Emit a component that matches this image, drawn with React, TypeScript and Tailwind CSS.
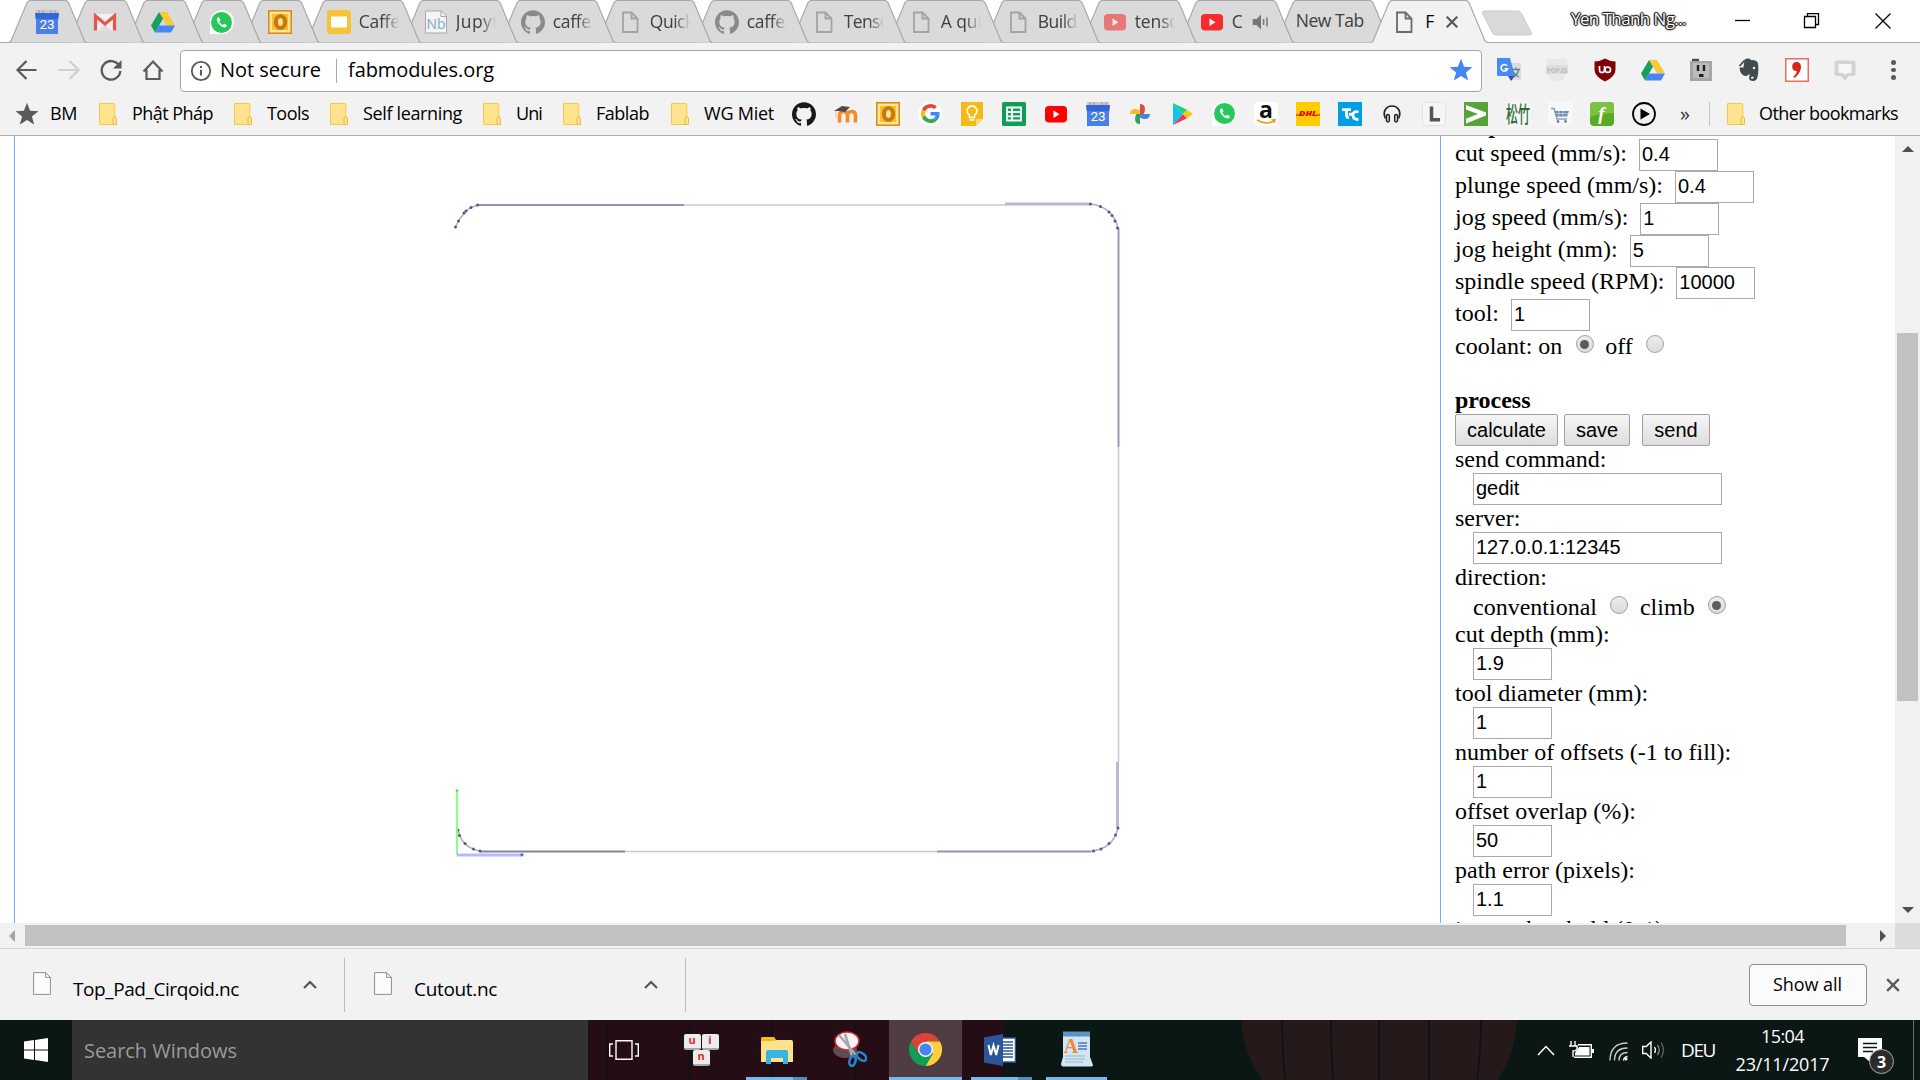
import React, { useLayoutEffect, useRef, useState } from "react";
import { SiGithub } from "react-icons/si";

/* Text run that tracks its letters so that it fills a given width. */
function Fit({ w, className = "", children }: { w: number; className?: string; children: string }) {
  const ref = useRef<HTMLSpanElement>(null);
  const [ls, setLs] = useState(0);
  useLayoutEffect(() => {
    if (!ref.current) return;
    const natural = ref.current.getBoundingClientRect().width;
    setLs((w - natural) / children.length);
  }, []);
  return (
    <span ref={ref} className={"inline-block shrink-0 whitespace-pre " + className} style={{ letterSpacing: ls }}>
      {children}
    </span>
  );
}

/* ---------- icons ---------- */
const I = ({ children, vb = "0 0 24 24", className = "size-6" }: { children: React.ReactNode; vb?: string; className?: string }) => (
  <svg viewBox={vb} className={"shrink-0 " + className} fill="none">{children}</svg>
);
const Calendar = () => (
  <I>
    <rect x="1" y="0" width="22" height="6" fill="#c9c9c9" />
    <path d="M4 0v3M8 0v3M16 0v3M20 0v3" stroke="#9a9a9a" />
    <path d="M0 3h24l-1 8v13H1V11z" fill="#4a7fe8" />
    <path d="M0 3h24l-1 6H1z" fill="#3367d6" />
    <text x="12" y="18.5" fontSize="13.500" textAnchor="middle" fill="#fff" fontFamily="Roboto">23</text>
  </I>
);
const Gmail = () => (
  <I>
    <rect x="1" y="4" width="22" height="17" rx="1.5" fill="#f3f0f0" />
    <path d="M5 21l7-7 7 7z" fill="#dedcdc" />
    <path d="M2.5 20.500V6L12 14l9.500-8v14.500" stroke="#e0574c" strokeWidth="3.200" />
  </I>
);
const Drive = () => (
  <I>
    <path d="M8 2h8l8 13.500h-8z" fill="#fbc934" />
    <path d="M8 2l4 6.800L4 22.500 0 15.500z" fill="#17a05d" />
    <path d="M8 15.500h16l-4 7H4z" fill="#4787f3" />
  </I>
);
const WhatsApp = () => (
  <span className="flex size-6 shrink-0 items-center justify-center rounded-full rounded-bl-sm bg-white">
    <span className="flex size-[21px] items-center justify-center rounded-full bg-[#25c95b]">
      <I className="size-[17px]">
        <path d="M7.500 4.500C5 6 4.500 9 8 13.500s8 7 10.500 5c1.500-1.500 1-2.500 0-3.200l-2.500-1.500c-1 0-1.500 2-2.500 1.700-2-.8-4-3-4.500-4.500 0-1 1.500-1.500 1.500-2.500l-1.300-3c-.3-.8-1-1-1.700-1z" fill="#fff" />
      </I>
    </span>
  </span>
);
const Outlook = () => (
  <I>
    <rect x=".75" y=".75" width="22.500" height="22.500" fill="#fcd364" stroke="#d98d1c" strokeWidth="1.500" />
    <rect x="3" y="3" width="18" height="18" fill="#f8bf2c" stroke="#fff0b8" strokeWidth="1.500" />
    <ellipse cx="12.500" cy="12" rx="4.700" ry="6" stroke="#c97712" strokeWidth="4" />
    <ellipse cx="12.500" cy="12" rx="2" ry="3.500" fill="#fde9a9" />
  </I>
);
const Slides = () => (
  <I>
    <rect width="24" height="24" rx="2.500" fill="#f6c338" />
    <rect x="4" y="6.500" width="16" height="11" fill="#fff" />
  </I>
);
const Notebook = () => (
  <I>
    <path d="M1.500 1h16l5 5v17h-21z" fill="#f5f5f5" stroke="#a8a8a8" />
    <path d="M17 1v5.500h5.500" stroke="#a8a8a8" />
    <text x="12" y="19" fontSize="15" textAnchor="middle" fill="#82b1d2" stroke="#82b1d2" strokeWidth=".2" fontFamily="Open Sans" textLength="19" lengthAdjust="spacingAndGlyphs">Nb</text>
  </I>
);
const Page = ({ dark = false }) => (
  <I className={dark ? "size-6 text-[#6b6b6b]" : "size-6 text-[#a3a3a3]"}>
    <path d="M5 2.500h8.500l6 6V22H5zM13.500 2.500v6h6" stroke="currentColor" strokeWidth="1.800" />
  </I>
);
const YouTube = () => (
  <I>
    <rect x="1" y="4" width="22" height="16.500" rx="4" fill="#f00" />
    <path d="M9.500 8.500l6 3.700-6 3.700z" fill="#fff" />
  </I>
);
const Star = ({ className }: { className: string }) => (
  <I className={className}>
    <path d="M12 0.800l3.100 7.900 8.300.5-6.500 5.200 2.300 8.200-7.200-4.700-7.200 4.700 2.300-8.200L.6 9.200l8.300-.5z" fill="currentColor" />
  </I>
);
const Folder = () => (
  <I vb="0 0 18 22" className="h-[22px] w-[18px]">
    <path d="M.5.5h14.800l.5 1v13.500h1.700v6.500H.5z" fill="#ffe38d" stroke="#f0c94f" />
    <path d="M14 21v-5.500q0-1.500 1.700-1.500t1.800 1.500v5q0 1-1.200 1H14" fill="#ffe38d" stroke="#e5b93a" />
  </I>
);
const Google = () => (
  <span className="flex size-6 items-center justify-center rounded-full bg-white">
    <svg viewBox="0 0 48 48" className="size-[19px]">
      <path fill="#EA4335" d="M24 9.500c3.540 0 6.710 1.220 9.210 3.600l6.850-6.850C35.900 2.380 30.470 0 24 0 14.620 0 6.510 5.380 2.560 13.220l7.980 6.190C12.430 13.720 17.740 9.500 24 9.500z" />
      <path fill="#4285F4" d="M46.980 24.550c0-1.570-.15-3.090-.38-4.550H24v9.020h12.940c-.58 2.960-2.260 5.480-4.780 7.180l7.730 6c4.510-4.180 7.090-10.360 7.090-17.650z" />
      <path fill="#FBBC05" d="M10.530 28.590c-.48-1.450-.76-2.990-.76-4.590s.27-3.140.76-4.590l-7.980-6.190C.92 16.460 0 20.120 0 24c0 3.880.92 7.540 2.560 10.780l7.970-6.190z" />
      <path fill="#34A853" d="M24 48c6.480 0 11.930-2.130 15.890-5.810l-7.730-6c-2.150 1.450-4.920 2.300-8.160 2.300-6.260 0-11.570-4.220-13.470-9.910l-7.980 6.190C6.510 42.620 14.620 48 24 48z" />
    </svg>
  </span>
);
const Moodle = () => (
  <I>
    <path d="M5.500 20.500v-7q0-4 4-4t4 4v7m0-7q0-4 4-4t4 4v7" stroke="#f68a2b" strokeWidth="3.600" />
    <path d="M0 9l8-5 8 1-5 5-6-1z" fill="#4a4a4a" />
    <path d="M2 9v7" stroke="#e5c3a0" />
  </I>
);
const Keep = () => (
  <I>
    <path d="M1 0h22v17l-7 7H1z" fill="#f5ba15" />
    <path d="M23 17l-7 7v-7z" fill="#fbdc7c" />
    <path d="M9.500 15.500v-2.300a5 5 0 1 1 5 0v2.300zM9.500 18h5" stroke="#fff" strokeWidth="1.600" />
  </I>
);
const Sheets = () => (
  <I>
    <rect width="24" height="24" rx="1.500" fill="#109d58" />
    <path d="M5 5.500h14v13H5zM5 10h14M5 14.300h14M10 5.500v13" stroke="#fff" strokeWidth="1.800" />
  </I>
);
const Photos = () => (
  <I>
    <path d="M12 12V2q5 0 5 5.500 0 2-1.500 4.500z" fill="#dc4b3e" />
    <path d="M12 12h10q0 5-5.500 5-2 0-4.500-1.500z" fill="#4a80e8" />
    <path d="M12 12v10q-5 0-5-5.500 0-2 1.500-4.500z" fill="#2da160" />
    <path d="M12 12H2q0-5 5.500-5 2 0 4.500 1.500z" fill="#f9bb2d" />
  </I>
);
const Play = () => (
  <I>
    <path d="M3 1v22l10-11z" fill="#13c3ef" />
    <path d="M3 1l10 11 4-4.300z" fill="#17d477" />
    <path d="M3 23l10-11 4 4.300z" fill="#ef3650" />
    <path d="M17 7.700L23 12l-6 4.300L13 12z" fill="#fdc612" />
  </I>
);
const Amazon = () => (
  <I>
    <rect width="24" height="24" rx="4" fill="#fff" />
    <text x="12" y="16" fontSize="23" fontWeight="700" textAnchor="middle" fill="#111" fontFamily="Open Sans">a</text>
    <path d="M3 18q8.500 5.500 17 1M17.500 18l3.500-.3-1 3" stroke="#f79c1d" strokeWidth="1.600" />
  </I>
);
const Dhl = () => (
  <I>
    <rect width="24" height="24" fill="#fc0" />
    <text x="12" y="14" fontSize="6" fontWeight="800" fontStyle="italic" textAnchor="middle" fill="#d40511" fontFamily="Open Sans" textLength="18" lengthAdjust="spacingAndGlyphs">DHL</text>
    <path d="M0 13h4M20 13h4" stroke="#d40511" />
  </I>
);
const Tk = () => (
  <I>
    <rect width="24" height="24" fill="#009fe3" />
    <path d="M4 7.700h9M8.500 7.500v6q0 2 2.500 2M20.500 10q-5.500-1.500-5.500 3t5.500 4.500M15 12l-4 .5" stroke="#fff" strokeWidth="2.800" />
  </I>
);
const Headphones = () => (
  <I>
    <path d="M5.500 16.500C2 9 6.500 4 12 4s10 5 6.500 12.500" stroke="#222" strokeWidth="1.700" />
    <rect x="6.500" y="12.500" width="2.800" height="7.500" rx="1.400" stroke="#222" strokeWidth="1.500" />
    <rect x="14.700" y="12.500" width="2.800" height="7.500" rx="1.400" stroke="#222" strokeWidth="1.500" />
  </I>
);
const Leo = () => (
  <I>
    <rect x=".5" y=".5" width="23" height="23" rx="3" fill="#f6f6f6" stroke="#e3e3e3" />
    <path d="M9.500 4.500v13.200h8.500" stroke="#555" strokeWidth="3.500" />
  </I>
);
const Arrow = () => (
  <I>
    <rect width="24" height="24" fill="#58a23a" />
    <path d="M2 3l20 7.500v3L2 21.500v-4.800L14 12 2 7.500z" fill="#fff" />
  </I>
);
const Bamboo = () => (
  <I>
    <rect width="24" height="24" fill="#f5f7f5" />
    <text x="12" y="20" fontSize="22" fontWeight="500" textAnchor="middle" fill="#2f6b3a" fontFamily="Noto Sans CJK SC" textLength="24" lengthAdjust="spacingAndGlyphs">松竹</text>
  </I>
);
const Cart = () => (
  <I>
    <rect width="24" height="24" fill="#f7f8fa" />
    <path d="M3 6.500h3l3 10.500h10" stroke="#8da0b8" strokeWidth="1.500" />
    <path d="M6.500 9H21l-2 5.500H8.500z" fill="#6d8bb0" />
    <path d="M11 9v5M15 9v5M7.500 11.500h13" stroke="#c9d5e4" strokeWidth=".8" />
    <circle cx="10" cy="19.500" r="1.400" fill="#7186a0" />
    <circle cx="17.500" cy="19.500" r="1.400" fill="#7186a0" />
  </I>
);
const Feedly = () => (
  <I>
    <rect width="24" height="24" rx="4" fill="#56ab22" />
    <path d="M0 4q0-4 4-4h16q4 0 4 4v7q-12 0-24 4z" fill="#7cc142" />
    <text x="11.500" y="17.500" fontSize="19" fontWeight="700" fontStyle="italic" textAnchor="middle" fill="#fff" fontFamily="Liberation Serif">f</text>
  </I>
);
const PlayCircle = () => (
  <I>
    <circle cx="12" cy="12" r="11" stroke="#000" strokeWidth="1.800" />
    <path d="M8.500 6.500l9.500 5.500-9.500 5.500z" fill="#000" />
  </I>
);
const Translate = () => (
  <I>
    <path d="M10 5h14v17H13z" fill="#dcdcdc" />
    <path d="M0 0h13l5 18H1.500Q0 18 0 16.500z" fill="#4a8af4" />
    <path d="M11 18h7l-4 5z" fill="#3a50b8" />
    <path d="M15 11.500h8M19 9.500v2M21.500 12q-1 5-5 7M16.500 14q2 3.500 5.500 5" stroke="#5f7b95" strokeWidth="1.300" />
    <path d="M10 7.700a3.300 3.300 0 1 0 .6 3H7.500" stroke="#fff" strokeWidth="1.600" />
  </I>
);
const Popjs = () => (
  <I>
    <path d="M2 1h20v6H2zM3 16h18l-2 5-7 3-7-3z" fill="#e8e8e8" />
    <rect x="1" y="7" width="22" height="9" fill="#dedede" />
    <text x="12" y="14.500" fontSize="8" fontWeight="700" textAnchor="middle" fill="#b9b9b9" fontFamily="Liberation Sans" textLength="20" lengthAdjust="spacingAndGlyphs">POPJS</text>
  </I>
);
const Ublock = () => (
  <I>
    <path d="M12 .5q5 3 10.500 3v8q0 7-10.500 12Q1.500 18.500 1.500 11.500v-8Q7 3.500 12 .5z" fill="#800005" />
    <path d="M6.500 8v4q0 2.500 2.500 2.500t2.500-2.500V8" stroke="#fff" strokeWidth="1.700" />
    <circle cx="14.800" cy="11.700" r="2.700" stroke="#fff" strokeWidth="1.700" />
  </I>
);
const Socket = () => (
  <I>
    <path d="M1 3h2V.500h7V3h13v20H1z" fill="#a5a5a5" />
    <path d="M3 1h7v2H3z" fill="#4b4b4b" />
    <rect x="4" y="5" width="16" height="15" fill="#bcbcbc" />
    <path d="M9 7v6M15 7v6" stroke="#1f1f1f" strokeWidth="2.400" />
    <path d="M10 17.500h4.500" stroke="#1f1f1f" strokeWidth="3" />
  </I>
);
const Evernote = () => (
  <I>
    <path d="M7.500 1.500Q12-.5 14 2q7 0 7 4 1 6-.5 13-.8 4-4.500 4-4 0-4-3.500 0-2.500 3-2.500v2q-1.500 0-1 1.500 2.500 1 3-1.500-4 0-5-3-1 2.500-4 2Q3 17 2.500 9.500h4z" fill="#3f4c50" />
    <path d="M2.500 8l5-5.500" stroke="#3f4c50" strokeWidth="1.800" />
    <circle cx="17" cy="10" r="1.200" fill="#f2f2f2" />
  </I>
);
const Nine = () => (
  <I>
    <rect x=".75" y=".75" width="22.500" height="22.500" fill="#fff" stroke="#ee6a5f" strokeWidth="1.500" />
    <path d="M12 4c5 0 6.500 9-2.500 16l-1.300-1.300q3.800-3.200 3.500-5.700-4.500 0-4.500-4.500T12 4z" fill="#d8251b" />
  </I>
);
const Bubble = () => (
  <I>
    <path d="M4 2.500h16q2.500 0 2.500 2.500v10.500q0 2.500-2.500 2.500h-4l-4 4.500L8 18H4q-2.500 0-2.500-2.500V5q0-2.500 2.500-2.500z" fill="#d3d3d3" />
    <path d="M5.500 6h13v9h-4.500l-2 2-2-2H5.500z" fill="#f7f7f7" />
  </I>
);
const GitHub = ({ className }: { className: string }) => <SiGithub className={"size-6 shrink-0 " + className} />;

/* ---------- tab strip ---------- */
function Tab({ w, z, children, active = false, className = "" }: { w: number; z: number; children: React.ReactNode; active?: boolean; className?: string }) {
  return (
    <div className={"relative flex h-[43px] shrink-0 items-start " + className} style={{ width: w, zIndex: z }}>
      <svg className="absolute inset-0 h-[43px] w-full" viewBox={`0 0 ${w} 43`} preserveAspectRatio="none">
        <path d={`M0 42.500L2 41 18 2.500 20.500.5H${w - 20.5}L${w - 18} 2.500 ${w - 2} 41 ${w} 42.500`} fill={active ? "#f2f2f2" : "#dadada"} stroke="#a9a9a9" strokeWidth="1.200" />
        {active && <path d={`M1 42.700H${w - 1}`} stroke="#f2f2f2" strokeWidth="1.500" />}
      </svg>
      <div className="relative flex w-full items-center pt-[10px]">{children}</div>
    </div>
  );
}
const Title = ({ children, w = 48, className = "" }: { children: string; w?: number; className?: string }) => (
  <span className={"-mt-[2px] ml-[8px] w-[41px] overflow-hidden text-[17.500px] leading-6 text-[#404040] [mask-image:linear-gradient(90deg,#000_60%,transparent_98%)] " + className}>
    <Fit w={w}>{children}</Fit>
  </span>
);

const pinned = [Calendar, Gmail, Drive, WhatsApp, Outlook];
const tabs: { icon: React.ReactNode; title: string; w: number }[] = [
  { icon: <Slides />, title: "Caffe", w: 41 },
  { icon: <Notebook />, title: "Jupyt", w: 43 },
  { icon: <GitHub className="text-[#8a8a8a]" />, title: "caffe/", w: 44 },
  { icon: <Page />, title: "Quick", w: 44 },
  { icon: <GitHub className="text-[#8a8a8a]" />, title: "caffe/", w: 44 },
  { icon: <Page />, title: "Tenso", w: 46 },
  { icon: <Page />, title: "A qui", w: 41 },
  { icon: <Page />, title: "Build", w: 39 },
  { icon: <span className="opacity-45"><YouTube /></span>, title: "tenso", w: 45 },
];

function TabStrip() {
  return (
    <div className="relative flex h-[43px] bg-white pl-[9px] shadow-[inset_0_-1px_0_#a9a9a9]">
      {pinned.map((P, i) => (
        <Tab key={i} w={77.5} z={30 - i} className={i ? "-ml-[19.200px]" : ""}>
          <span className="flex w-full justify-center pr-[2px]"><P /></span>
        </Tab>
      ))}
      {tabs.map((t, i) => (
        <Tab key={i} w={116} z={20 - i} className={i ? "-ml-[19px]" : "-ml-[15px]"}>
          <span className="ml-[22px] flex">{t.icon}</span>
          <Title w={t.w}>{t.title}</Title>
        </Tab>
      ))}
      <Tab w={116} z={10} className="-ml-[19px]">
        <span className="ml-[22px] flex opacity-80"><YouTube /></span>
        <Title w={12} className="!w-[10px] [mask-image:none]">C</Title>
        <I className="ml-[10px] size-[18px] text-[#777]">
          <path d="M1 8h5l6-6v20l-6-6H1z" fill="currentColor" />
          <path d="M15.500 8v8M20 6v12" stroke="currentColor" strokeWidth="2" />
        </I>
      </Tab>
      <Tab w={116} z={9} className="-ml-[19px]">
        <Fit w={68} className="-mt-[2px] ml-[21px] text-[17.500px] leading-6 text-[#404040]">New Tab</Fit>
      </Tab>
      <Tab w={116} z={35} active className="-ml-[19.500px]">
        <span className="ml-[21px] flex"><Page dark /></span>
        <span className="-mt-[2px] ml-[9px] w-[16px] text-[17.500px] leading-6">F</span>
        <I className="ml-[5px] size-3">
          <path d="M1.500 1.500l21 21M22.500 1.500l-21 21" stroke="#5a5a5a" strokeWidth="4.500" />
        </I>
      </Tab>
      <svg viewBox="0 0 52 26" className="mt-[10px] -ml-[6px] h-[26px] w-[52px]">
        <path d="M4 1h33q2.500 0 3.500 2.500l10 19.500q.5 2-2 2H15q-2.500 0-3.500-2.500L1.500 3.500Q1 1 4 1z" fill="#d9d9d9" stroke="#c9c9c9" />
      </svg>
      <div className="ml-auto flex items-start">
        <Fit w={115} className="mt-[7px] text-[17px] leading-6 text-white [text-shadow:0_0_2px_#000,0_0_2px_#000,1px_0_1px_#222,-1px_0_1px_#222,0_1px_1px_#222,0_-1px_1px_#222]">Yen Thanh Ng...</Fit>
        <svg viewBox="0 0 156 16" className="mt-[13px] mr-[29px] ml-[49px] h-4 w-[156px]" fill="none" stroke="#000" strokeWidth="1.300">
          <path d="M0 7.500h15" />
          <path d="M69.500 3.500h11v11h-11zM72.500 3.500v-3h11v11h-3" />
          <path d="M140.500.5l15 15M155.500.5l-15 15" />
        </svg>
      </div>
    </div>
  );
}

/* ---------- toolbar ---------- */
const extensions = [Translate, Popjs, Ublock, Drive, Socket, Evernote, Nine, Bubble];

function Toolbar() {
  return (
    <div className="flex h-[54px] items-center pt-px pl-[15px]">
      <div className="mb-[2px] flex items-center gap-[18px] text-[#5a5a5a]">
        <I><path d="M21.500 12H3M11.500 3L2.500 12l9 9" stroke="currentColor" strokeWidth="2.200" /></I>
        <I><path d="M1.500 12h19M12.500 3l9 9-9 9" stroke="#d0d0d0" strokeWidth="2.200" /></I>
        <I>
          <path d="M20 7.500A9.300 9.300 0 1 0 21.300 13" stroke="currentColor" strokeWidth="2.300" />
          <path d="M22.500 2v8.500H14z" fill="currentColor" />
        </I>
        <I><path d="M2.500 13.500L12 3.500l9.500 10M5.500 11.500V21h13v-9.500" stroke="currentColor" strokeWidth="2.200" /></I>
      </div>
      <div className="ml-[15px] flex h-[42px] w-[1302px] items-center rounded-[4px] border border-[#a6a6a6] bg-white text-[20px] text-black">
        <I className="ml-[9px] size-[22px]">
          <circle cx="12" cy="12" r="10" stroke="#5a5a5a" strokeWidth="2" />
          <path d="M12 10.500v6.500M12 6.500v2.200" stroke="#5a5a5a" strokeWidth="2.300" />
        </I>
        <Fit w={101} className="ml-[8px] pb-px">Not secure</Fit>
        <span className="ml-[15px] h-6 w-px bg-[#a8a8a8]" />
        <Fit w={146} className="ml-[11px] pb-px">fabmodules.org</Fit>
        <Star className="mr-[8px] mb-[2px] ml-auto size-[24px] text-[#4285f4]" />
      </div>
      <div className="mb-px ml-[15px] flex gap-6">{extensions.map((E, i) => <E key={i} />)}</div>
      <div className="mb-px ml-[34px] flex flex-col gap-[3px]">
        {[0, 1, 2].map((i) => <span key={i} className="size-[4.500px] rounded-full bg-[#5a5a5a]" />)}
      </div>
    </div>
  );
}

const folders: [string, number, string][] = [
  ["Phật Pháp", 81, "ml-[22px]"],
  ["Tools", 42, "ml-[21px]"],
  ["Self learning", 99, "ml-[21px]"],
  ["Uni", 26, "ml-[21px]"],
  ["Fablab", 53, "ml-[21px]"],
  ["WG Miet", 70, "ml-[22px]"],
];
const shortcuts = [() => <GitHub className="text-[#191717]" />, Moodle, Outlook, Google, Keep, Sheets, YouTube, Calendar, Photos, Play, WhatsApp, Amazon, Dhl, Tk, Headphones, Leo, Arrow, Bamboo, Cart, Feedly, PlayCircle];

function Bookmarks() {
  return (
    <div className="flex h-[39px] items-center border-b border-[#b0b0b0] pb-[5px] pl-[15px] text-[18px] text-black">
      <Star className="size-6 text-[#5a5a5a]" />
      <Fit w={27} className="ml-[11px]">BM</Fit>
      {folders.map(([name, w, ml]) => (
        <span key={name} className={"flex items-center " + ml}>
          <Folder />
          <Fit w={w} className="ml-[15px]">{name}</Fit>
        </span>
      ))}
      <div className="ml-[18px] flex gap-[18px]">{shortcuts.map((S, i) => <S key={i} />)}</div>
      <span className="ml-[24px] w-[12px] text-[20px] leading-5 text-[#333]">»</span>
      <span className="ml-[17px] h-6 w-px bg-[#c4c4c4]" />
      <span className="ml-[17px] flex items-center"><Folder /></span>
      <Fit w={139} className="ml-[14px]">Other bookmarks</Fit>
    </div>
  );
}

/* ---------- page ---------- */
function ToolPath() {
  const dots: [number, number][] = [
    [455.5, 91], [458.5, 85], [464, 77], [466, 75], [471, 71.5], [477.5, 69],
    [1090.5, 68], [1100.5, 70.5], [1109, 76], [1112, 79.500], [1115, 85], [1117.5, 92],
    [1118, 692], [1115.500, 699], [1109, 707.500], [1101, 713], [1093.500, 715],
    [458, 694], [459.5, 699.5], [465, 707.5], [473.5, 713], [480, 715],
  ];
  return (
    <svg viewBox="0 0 1425 787" className="-ml-[15px] h-[787px] w-[1425px] shrink-0" fill="none">
      <path d="M455.500 91L459 84l6-8 6-4.500 7-2.500M1091 68q22 3 27 24M1118 692q-5 21-27 23M458 694q4 18 22 21" stroke="#b0adc4" strokeWidth="1.500" />
      <path d="M684 69H1005M1118.500 311V626M625 715.500H937" stroke="#c9c7d8" strokeWidth="1.500" />
      <path d="M478 69H684M1118.500 92V311M1091 715.500H937" stroke="#9490b4" strokeWidth="1.800" />
      <path d="M1005 68H1090M1117.500 626V692" stroke="#b9b6cd" strokeWidth="2.800" />
      <path d="M480 715.500H625" stroke="#85859a" strokeWidth="1.800" />
      {dots.map(([x, y], i) => <circle key={i} cx={x} cy={y} r="1.500" fill="#5a5680" />)}
      <path d="M457 654V719" stroke="#7dff7d" strokeWidth="1.800" />
      <circle cx="457" cy="654.500" r="1.300" fill="#2cf52c" />
      <path d="M457 719H522" stroke="#b9b9ff" strokeWidth="2.800" />
      <circle cx="522" cy="718.800" r="1.600" fill="#5f5fff" />
    </svg>
  );
}

const Field = ({ value, wide = false }: { value: string; wide?: boolean }) => (
  <div className={"flex h-8 shrink-0 items-center border border-[#a9a9a9] bg-white pl-[2px] font-['Liberation_Sans',sans-serif] text-[20px] leading-[23px] " + (wide ? "w-[249px]" : "w-[79px]")}>
    <span className="-mt-px">{value}</span>
  </div>
);
const Radio = ({ on = false, className = "" }: { on?: boolean; className?: string }) => (
  <span className={"flex size-[18px] shrink-0 items-center justify-center rounded-full border border-[#a0a0a0] bg-gradient-to-b from-[#ececec] to-[#dcdcdc] " + className}>
    {on && <span className="size-[9px] rounded-full bg-[#5c5c5c]" />}
  </span>
);
const Button = ({ children, className }: { children: string; className: string }) => (
  <button className={"h-8 rounded-[2px] border border-[#a0a0a0] bg-gradient-to-b from-[#f6f6f6] to-[#dedede] pb-px text-center font-['Liberation_Sans',sans-serif] text-[20px] leading-none text-black " + className}>{children}</button>
);

const speeds: [string, string][] = [
  ["cut speed (mm/s):", "0.4"],
  ["plunge speed (mm/s):", "0.4"],
  ["jog speed (mm/s):", "1"],
  ["jog height (mm):", "5"],
  ["spindle speed (RPM):", "10000"],
  ["tool:", "1"],
];
const params: [string, string][] = [
  ["cut depth (mm):", "1.9"],
  ["tool diameter (mm):", "1"],
  ["number of offsets (-1 to fill):", "1"],
  ["offset overlap (%):", "50"],
  ["path error (pixels):", "1.1"],
];

function Panel() {
  return (
    <div className="flex h-[787px] w-[455px] shrink-0 flex-col overflow-hidden border-l border-[#74aaf7] pl-[14px] font-['Liberation_Serif',serif] text-[24px] leading-[27px] text-black">
      <div className="-mt-[24px] h-[27px] shrink-0 font-bold">output</div>
      {speeds.map(([label, value]) => (
        <div key={label} className="flex h-8 shrink-0 items-start">
          <span className="pt-px">{label}</span>
          <span className="w-[12px]" />
          <Field value={value} />
        </div>
      ))}
      <div className="flex h-[56px] shrink-0 items-start">
        <span className="pt-[2px]">coolant: on</span>
        <Radio on className="mt-[4px] ml-[13.500px]" />
        <span className="ml-[11.500px] pt-[2px]">off</span>
        <Radio className="mt-[4px] ml-[13px]" />
      </div>
      <div className="h-[27px] shrink-0 font-bold">process</div>
      <div className="flex h-8 shrink-0">
        <Button className="w-[103px]">calculate</Button>
        <Button className="ml-[6px] w-[66px]">save</Button>
        <Button className="ml-[12px] w-[68px]">send</Button>
      </div>
      <div className="h-[27px] shrink-0">send command:</div>
      <div className="pl-[18px]"><Field wide value="gedit" /></div>
      <div className="h-[27px] shrink-0">server:</div>
      <div className="pl-[18px]"><Field wide value="127.0.0.1:12345" /></div>
      <div className="h-[30px] shrink-0">direction:</div>
      <div className="flex h-[27px] shrink-0 items-start pl-[18px]">
        <span>conventional</span>
        <Radio className="mt-[2px] ml-[13px]" />
        <span className="ml-[12px]">climb</span>
        <Radio on className="mt-[2px] ml-[13px]" />
      </div>
      {params.map(([label, value]) => (
        <React.Fragment key={label}>
          <div className="h-[27px] shrink-0">{label}</div>
          <div className="pl-[18px]"><Field value={value} /></div>
        </React.Fragment>
      ))}
      <div className="h-[27px] shrink-0">image threshold (0-1):</div>
    </div>
  );
}

function Scrollbars() {
  return (
    <div className="flex h-[26px] border-b border-[#d4d4d4] bg-[#f1f1f1]">
      <div className="flex w-[1895px] items-center pl-[9px]">
        <svg viewBox="0 0 6 12" className="h-3 w-[6px]"><path d="M6 0v12L0 6z" fill="#a3a3a3" /></svg>
        <div className="ml-[10px] h-[21px] w-[1821px] bg-[#c1c1c1]" />
        <svg viewBox="0 0 6 12" className="ml-[34px] h-3 w-[6px]"><path d="M0 0v12l6-6z" fill="#505050" /></svg>
      </div>
      <div className="w-[25px] bg-[#dcdcdc]" />
    </div>
  );
}

/* ---------- downloads shelf ---------- */
function Download({ name, w, className }: { name: string; w: number; className: string }) {
  return (
    <div className={"flex h-[54px] items-center border-r border-[#bdbdbd] " + className}>
      <I vb="0 0 18 23" className="mb-[2px] h-[23px] w-[18px]">
        <path d="M.6.600h12l4.800 4.800v17H.6z" fill="#fbfcfc" stroke="#8f8f8f" />
        <path d="M12.600.6v4.800h4.800" stroke="#8f8f8f" />
      </I>
      <Fit w={w} className="mt-[8px] ml-[22px] text-[19px] leading-6 text-black">{name}</Fit>
      <I vb="0 0 14 9" className="mr-[27px] mb-[1px] ml-auto h-[9px] w-[14px]"><path d="M1 8l6-6 6 6" stroke="#555" strokeWidth="2.200" /></I>
    </div>
  );
}
function Shelf() {
  return (
    <div className="flex h-[71px] items-center bg-[#f2f2f2]">
      <Download name="Top_Pad_Cirqoid.nc" w={166} className="ml-[33px] w-[312px]" />
      <Download name="Cutout.nc" w={83} className="ml-[29px] w-[312px]" />
      <div className="ml-auto flex h-[42px] w-[118px] items-center justify-center rounded-[4px] border border-[#8c8c8c] bg-[#fbfbfb] pr-px text-[18px] font-[500] text-black">
        <Fit w={69}>Show all</Fit>
      </div>
      <I className="mr-[20px] ml-[19px] size-[14px]"><path d="M2 2l20 20M22 2L2 22" stroke="#5a5a5a" strokeWidth="4" /></I>
    </div>
  );
}

/* ---------- taskbar ---------- */
const Key = ({ c }: { c: string }) => (
  <span className="flex h-[16px] w-[17px] items-center justify-center rounded-[2px] border-b-2 border-[#a9a9a9] bg-[#ececec] pb-[2px] text-[11px] leading-none font-bold text-[#e02b2b]">{c}</span>
);
const Run = ({ split = false, className = "" }: { split?: boolean; className?: string }) => (
  <span className={"flex h-[3px] " + className}>
    <span className="h-full flex-1 bg-[#76b9ed]" />
    {split && <span className="h-full w-[14px] bg-[#5b8db4]" />}
  </span>
);
const TaskButton = ({ children, className, run }: { children: React.ReactNode; className: string; run?: React.ReactNode }) => (
  <div className={"flex h-[60px] shrink-0 flex-col items-center " + className}>
    <div className="flex h-[57px] items-center">{children}</div>
    {run}
  </div>
);

function Taskbar() {
  return (
    <div className="relative flex h-[60px] bg-[#0b1715] text-white">
      <div className="flex w-[72px] items-center pl-[24px]">
        <I className="size-6"><path d="M0 3.500l10-1.400v9.400H0zM11 2L24 0v11.500H11zM0 12.500h10v9.400L0 20.500zM11 12.500h13V24l-13-2z" fill="#fff" /></I>
      </div>
      <div className="flex w-[516px] items-center bg-[#333] pt-[2px] pl-[12px] text-[20px] text-[#9a9a9a]">
        <Fit w={153}>Search Windows</Fit>
      </div>
      <div className="flex w-[416px] bg-[#240d15] bg-[linear-gradient(90deg,transparent_18px,#141013_18px,#141013_20px,transparent_20px,transparent_100px,#141013_100px,#141013_103px,transparent_103px,transparent_182px,#141013_182px,#141013_185px,transparent_185px,transparent_266px,#141013_266px,#141013_268px,transparent_268px)]">
        <div className="ml-[21px] flex items-center">
          <I vb="0 0 30 20" className="h-5 w-[30px]">
            <path d="M7 .7h16v18.600H7zM4 4H.7v12H4M26 4h3.300v12H26" stroke="#fff" strokeWidth="1.400" />
          </I>
        </div>
        <div className="ml-[44px] flex w-[36px] flex-wrap content-center justify-center gap-x-[1px] pb-px">
          <Key c="u" /><Key c="i" /><Key c="n" />
        </div>
        <TaskButton className="ml-[27px] w-[61px]" run={<Run split className="w-[61px]" />}>
          <I vb="0 0 32 27" className="mt-[4px] h-[27px] w-[32px]">
            <path d="M0 2q0-2 2-2h11l2 3h15q2 0 2 2v20H0z" fill="#ffe28a" />
            <path d="M0 2q0-2 2-2h11l1.500 4H0z" fill="#f5b91c" />
            <path d="M5 27V15q0-2 2-2h18q2 0 2 2v12h-5v-6H10v6z" fill="#37b3e6" />
          </I>
        </TaskButton>
        <TaskButton className="ml-[20px] w-[46px]">
          <I vb="0 0 34 36" className="h-9 w-[34px]">
            <ellipse cx="12" cy="19" rx="11.500" ry="7.500" fill="#5d4d54" stroke="#8a3a40" />
            <ellipse cx="14" cy="10" rx="12" ry="9" fill="#f5f3f4" stroke="#cf2a2f" strokeWidth="1.500" />
            <path d="M6 4l17 20M12 3l7 22" stroke="#a3a8ad" strokeWidth="2.500" />
            <ellipse cx="28.500" cy="25.500" rx="5.500" ry="3.300" transform="rotate(40 28.500 25.500)" stroke="#2686c9" strokeWidth="2.600" />
            <ellipse cx="19.500" cy="30" rx="3" ry="5" transform="rotate(15 19.500 30)" stroke="#2686c9" strokeWidth="2.600" />
          </I>
        </TaskButton>
        <TaskButton className="ml-[16px] w-[73px] bg-[#4f3d43]" run={<Run className="w-[73px]" />}>
          <svg viewBox="0 0 48 48" className="mt-[2px] size-[33px]">
            <path d="M24 12h20.800A24 24 0 0 1 24 48l10.400-18z" fill="#ffcd40" />
            <path d="M24 24l10.400 6L24 48A24 24 0 0 1 3.200 12l10.400 18z" fill="#0f9d58" />
            <path d="M3.200 12A24 24 0 0 1 44.800 12H24L13.600 30z" fill="#db4437" />
            <circle cx="24" cy="24" r="11" fill="#f1f1f1" />
            <circle cx="24" cy="24" r="8.800" fill="#4285f4" />
          </svg>
        </TaskButton>
      </div>
      <TaskButton className="-ml-[33px] w-[61px]" run={<Run split className="w-[61px]" />}>
        <I vb="0 0 32 32" className="mt-[2px] mr-[3px] size-8">
          <path d="M16 4h15.500v24H16z" fill="#fff" stroke="#2b579a" strokeWidth="1.500" />
          <path d="M19 8h10M19 11h10M19 14h10M19 17h10M19 20h10M19 23h10" stroke="#2b579a" strokeWidth="1.500" />
          <path d="M0 3.500L19 0v32L0 28.500z" fill="#2b579a" />
          <path d="M4.500 11l2.300 10L9.500 11.500 12.200 21 14.500 11" stroke="#fff" strokeWidth="2" />
        </I>
      </TaskButton>
      <TaskButton className="ml-[14px] w-[61px]" run={<Run className="w-[61px]" />}>
        <I vb="0 0 32 36" className="h-9 w-8">
          <path d="M2 2h27v24l3 8q0 1.500-3 1.500H2Q0 35 0 33l2-7z" fill="#cfe6f5" />
          <path d="M2 .5h27v5H2z" fill="#5f93bf" />
          <text x="10" y="22" fontSize="20" fontWeight="700" textAnchor="middle" fill="#f08a2a" fontFamily="Liberation Serif">A</text>
          <path d="M17 12h9M17 15h9M17 18h9" stroke="#5278c4" strokeWidth="1.500" />
          <path d="M4 25h20M4 28h20M4 31h18" stroke="#9eb3c2" strokeWidth="1.200" />
        </I>
      </TaskButton>
      <svg viewBox="0 0 276 60" className="ml-[134px] h-[60px] w-[276px] shrink-0">
        <path d="M0 0h276q-2 36-20 60H21Q2 32 0 0z" fill="#251a19" />
        <path d="M41 0q0 30 3 60M90 0q0 30 2 60M138 0v60M188 0v60M240 0q0 32-4 60" stroke="#110f10" strokeWidth="1.500" fill="none" />
      </svg>
      <div className="flex flex-1 items-center">
        <I vb="0 0 18 11" className="ml-[20px] h-[11px] w-[18px]"><path d="M1 10l8-8.500L17 10" stroke="#fff" strokeWidth="1.500" /></I>
        <I vb="0 0 25 19" className="ml-[14px] h-[19px] w-[25px]">
          <path d="M2 0v5M6 0v5M0 5h8v2q0 3-4 3v6" stroke="#fff" strokeWidth="1.400" />
          <path d="M9 3.700h13.300v12.600H5" stroke="#fff" strokeWidth="1.400" />
          <path d="M10 6h10.500v8.500H6V12z" fill="#fff" /><path d="M23 8h2v4h-2z" fill="#fff" />
        </I>
        <I vb="0 0 19 19" className="mt-[2px] ml-[15px] h-[19px] w-[19px]">
          <path d="M1 18.500Q1 1 18.500 1M5.500 18.500q0-12.500 13-12.500M10 18.500q0-8 8.500-8" stroke="#c9cccc" strokeWidth="1.400" />
          <path d="M14.500 18.500q.5-3.500 4-4" stroke="#fff" strokeWidth="1.400" /><circle cx="17" cy="17" r="1.500" fill="#fff" />
        </I>
        <I vb="0 0 23 18" className="ml-[14px] h-[18px] w-[23px]">
          <path d="M.7 5.500h3.500L9 1v16l-4.800-4.500H.7z" stroke="#fff" strokeWidth="1.400" />
          <path d="M12.500 6q2 3 0 6" stroke="#fff" strokeWidth="1.300" /><path d="M15.500 4q3.500 5 0 10" stroke="#8a9090" strokeWidth="1.300" /><path d="M19 1.500q5 7.500 0 15" stroke="#5f6666" strokeWidth="1.300" />
        </I>
        <Fit w={34} className="ml-[16px] pt-px text-[19px]">DEU</Fit>
        <div className="ml-[20px] flex w-[95px] flex-col items-center text-[18px] leading-7">
          <Fit w={43}>15:04</Fit>
          <Fit w={94}>23/11/2017</Fit>
        </div>
        <div className="relative ml-[28px]">
          <I className="size-6"><path d="M0 0h24v19H12v5l-6-5H0z" fill="#fff" /><path d="M5 5.500h14M5 9.500h14M5 13.500h10" stroke="#0b1715" strokeWidth="1.400" /></I>
          <span className="absolute top-[11px] left-[11px] flex size-[25px] items-center justify-center rounded-full border border-[#a8a8a8] bg-[#2b2b2b] text-[16px] font-bold">3</span>
        </div>
        <span className="ml-[31px] h-full w-px bg-[#66706e]" />
      </div>
    </div>
  );
}

export default function App() {
  return (
    <div className="flex h-[1080px] w-[1920px] flex-col overflow-hidden bg-[#f2f2f2] font-['Open_Sans',sans-serif]">
      <TabStrip />
      <Toolbar />
      <Bookmarks />
      <div className="flex h-[787px] bg-white">
        <div className="ml-[14px] flex w-[1426px] overflow-hidden border-l border-[#74aaf7]"><ToolPath /></div>
        <Panel />
        <div className="flex w-[25px] flex-col items-center bg-[#f1f1f1]">
          <svg viewBox="0 0 12 6" className="mt-[10px] h-[6px] w-3"><path d="M0 6h12L6 0z" fill="#505050" /></svg>
          <div className="mt-[181px] h-[368px] w-[21px] bg-[#c1c1c1]" />
          <svg viewBox="0 0 12 6" className="mt-[206px] h-[6px] w-3"><path d="M0 0h12L6 6z" fill="#505050" /></svg>
        </div>
      </div>
      <Scrollbars />
      <Shelf />
      <Taskbar />
    </div>
  );
}
